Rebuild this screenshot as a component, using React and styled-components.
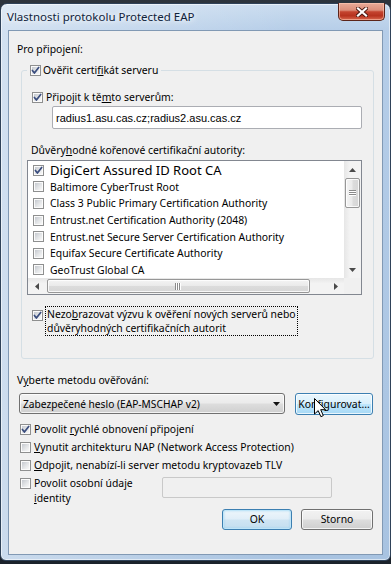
import React from "react";
import styled, { createGlobalStyle, css } from "styled-components";

const UI = `"Noto Sans", "Open Sans", "Liberation Sans", sans-serif`;

const GlobalStyle = createGlobalStyle`
  *, *::before, *::after { box-sizing: border-box; }
  html, body { margin: 0; padding: 0; }
  body {
    width: 391px; height: 564px; overflow: hidden;
    background: #1f2731;
    font-family: ${UI};
    font-size: 10.4px;
    color: #000;
  }
`;

const Screen = styled.div`
  width: 391px;
  height: 564px;
  padding-top: 3px;
  background: linear-gradient(180deg, #2d343d 0, #1b222b 100%);
`;

const Window = styled.div`
  height: 558px;
  display: flex;
  flex-direction: column;
  border: 1px solid #2f4259;
  border-radius: 7px 7px 6px 6px;
  background:
    linear-gradient(90deg, rgba(255,255,255,.40) 0%, rgba(255,255,255,.18) 40%, rgba(255,255,255,0) 75%),
    linear-gradient(180deg, #cadcef 0%, #b5cde8 28px, #a8c3e1 100%);
  box-shadow: inset 0 0 0 1px rgba(255,255,255,.55);
`;

const TitleBar = styled.div`
  height: 26px;
  flex: none;
  display: flex;
  align-items: flex-start;
  justify-content: space-between;
  padding: 0 5px 0 6px;
`;

const Title = styled.div`
  margin-top: 5px;
  font-size: 11.5px;
  line-height: 15px;
  color: #10233b;
  white-space: nowrap;
  text-shadow: 0 0 5px #fff, 0 0 9px rgba(255,255,255,.9);
`;

const CloseButton = styled.div`
  margin-top: -1px;
  width: 47px;
  height: 18px;
  border: 1px solid #5b2419;
  border-top: none;
  border-radius: 0 0 5px 5px;
  background: linear-gradient(180deg, #e9ab99 0%, #dc8e7a 42%, #c4442f 52%, #b6321e 75%, #d9684f 100%);
  box-shadow: inset 0 0 0 1px rgba(255,205,185,.55);
  display: flex;
  align-items: center;
  justify-content: center;
`;

const Client = styled.div`
  flex: 1;
  margin: 0 7px 5px;
  border: 1px solid #8199b4;
  background: #f0f0f0;
  display: flex;
  flex-direction: column;
  align-items: flex-start;
  padding: 10px 8px 0;
`;

const Text = styled.div`
  line-height: 16px;
  white-space: nowrap;
  margin: ${(p) => p.$m || "0"};
`;

const Acc = styled.span`
  text-decoration: underline;
  text-underline-offset: 1px;
`;

const Group = styled.fieldset`
  align-self: stretch;
  margin: 5px 0 0 4px;
  padding: 0 11px 22px 5px;
  border: 1px solid #d5dfe5;
  border-radius: 3px;
  min-inline-size: 0;
`;

const Legend = styled.legend`
  padding: 0 3px;
  height: 16px;
  display: flex;
  align-items: center;
  gap: 2px;
  line-height: 16px;
  white-space: nowrap;
`;

const GroupBody = styled.div`
  display: flex;
  flex-direction: column;
  align-items: flex-start;
`;

const CheckRow = styled.label`
  display: flex;
  align-items: center;
  gap: ${(p) => p.$gap || 3}px;
  height: 16px;
  line-height: 16px;
  white-space: nowrap;
  margin: ${(p) => p.$m || "0"};
`;

const ServerInput = styled.div`
  align-self: stretch;
  margin: 1px 0 0 25px;
  height: 23px;
  border: 1px solid #abadb3;
  border-radius: 2px;
  background: #fff;
  display: flex;
  align-items: center;
  padding-left: 3px;
  font-family: "Liberation Sans", Arial, sans-serif;
  font-size: 11px;
`;

const ListBox = styled.div`
  align-self: stretch;
  margin-top: 2px;
  height: 135px;
  border: 1px solid #828790;
  background: #fff;
  display: grid;
  grid-template-columns: 1fr 17px;
  grid-template-rows: 1fr 16px;
`;

const ListRows = styled.div`
  overflow: hidden;
  display: flex;
  flex-direction: column;
  padding-top: 1px;
`;

const ListRow = styled.div`
  flex: none;
  height: 16.6px;
  display: flex;
  align-items: center;
  gap: 6px;
  padding-left: 5px;
  white-space: nowrap;
  font-size: ${(p) => (p.$big ? "13px" : "10.4px")};
`;

const VScroll = styled.div`
  display: flex;
  flex-direction: column;
  background: linear-gradient(90deg, #e6e6e6 0%, #f3f3f3 35%, #f3f3f3 100%);
`;

const HScroll = styled.div`
  display: flex;
  align-items: stretch;
  background: linear-gradient(180deg, #e6e6e6 0%, #f3f3f3 35%, #f3f3f3 100%);
`;

const Corner = styled.div`
  background: #f0f0f0;
`;

const ArrowBtn = styled.div`
  flex: none;
  width: 17px;
  height: 17px;
  display: flex;
  align-items: center;
  justify-content: center;
  ${(p) => p.$h && css`height: 16px;`}
`;

const VThumb = styled.div`
  flex: none;
  height: 30px;
  margin: 0 1px;
  border: 1px solid #979797;
  border-radius: 2px;
  background: linear-gradient(90deg, #f4f4f4 0%, #eaeaea 48%, #dcdcdc 52%, #d6d6d6 100%);
  box-shadow: inset 0 0 0 1px rgba(255,255,255,.8);
  display: flex;
  align-items: center;
  justify-content: center;
`;

const HThumb = styled.div`
  flex: none;
  width: 263px;
  margin: 1px 0 1px 2px;
  border: 1px solid #979797;
  border-radius: 2px;
  background: linear-gradient(180deg, #f4f4f4 0%, #eaeaea 48%, #dcdcdc 52%, #d6d6d6 100%);
  box-shadow: inset 0 0 0 1px rgba(255,255,255,.8);
  display: flex;
  align-items: center;
  justify-content: center;
`;

const Track = styled.div`
  flex: 1;
`;

const FocusText = styled.span`
  border: 1px dotted #000;
  padding: 0 1px;
  line-height: 14.2px;
  white-space: nowrap;
`;

const FocusRow = styled.label`
  display: flex;
  align-items: flex-start;
  gap: 2px;
  margin: 11px 0 0 5px;
  & > svg { margin-top: 4px; }
`;

const MethodRow = styled.div`
  display: flex;
  align-items: flex-start;
  margin: 5px 0 0 2px;
`;

const buttonBase = css`
  border: 1px solid #707070;
  border-radius: 3px;
  background: linear-gradient(180deg, #f2f2f2 0%, #ebebeb 48%, #dddddd 52%, #cfcfcf 100%);
  box-shadow: inset 0 0 0 1px rgba(255,255,255,.75);
  font-family: ${UI};
  font-size: 10.4px;
  color: #000;
`;

const Combo = styled.div`
  ${buttonBase};
  width: 266px;
  height: 21px;
  display: flex;
  align-items: center;
  justify-content: space-between;
  padding: 0 4px 0 3px;
  white-space: nowrap;
  font-size: 10.2px;
`;

const Button = styled.div`
  ${buttonBase};
  position: relative;
  flex: none;
  width: ${(p) => p.$w}px;
  height: ${(p) => p.$h || 21}px;
  margin-left: ${(p) => p.$ml || 0}px;
  display: flex;
  align-items: center;
  justify-content: center;
  white-space: nowrap;
  ${(p) =>
    p.$hover &&
    css`
      border-color: #3c7fb1;
      background: linear-gradient(180deg, #eaf6fd 0%, #d9f0fc 48%, #bee6fd 52%, #a7d9f5 100%);
    `}
  ${(p) =>
    p.$default &&
    css`
      border-color: #3c7fb1;
      background: linear-gradient(180deg, #eef6fb 0%, #e0eef8 48%, #cfe5f3 52%, #c3def0 100%);
      box-shadow: inset 0 0 0 1px #bfe5f8, inset 0 0 2px 1px rgba(120,200,240,.6);
    `}
`;

const Cursor = styled.svg`
  position: absolute;
  left: 18px;
  top: 4px;
`;

const Options = styled.div`
  display: flex;
  flex-direction: column;
  gap: 2px;
  margin: 6px 0 0 3px;
`;

const IdentityRow = styled.div`
  display: flex;
  align-items: flex-start;
  margin: 3px 0 0 3px;
  & > svg { margin-top: 2px; }
`;

const IdentityLabel = styled.span`
  width: 124px;
  margin-left: 3px;
  line-height: 14.2px;
`;

const DisabledInput = styled.div`
  width: 170px;
  height: 21px;
  margin: 1px 0 0 4px;
  border: 1px solid #c9c9c9;
  border-radius: 2px;
  background: #f0f0f0;
`;

const Buttons = styled.div`
  align-self: stretch;
  display: flex;
  justify-content: flex-end;
  gap: 9px;
  margin: 4px 1px 0 0;
`;

function Check({ checked }) {
  return (
    <svg width="11" height="11" viewBox="0 0 11 11" style={{ flex: "none" }}>
      <defs>
        <linearGradient id="cbInner" x1="0" y1="0" x2="1" y2="1">
          <stop offset="0" stopColor="#c5c9cf" />
          <stop offset="0.55" stopColor="#e4e6e8" />
          <stop offset="1" stopColor="#f8f8f8" />
        </linearGradient>
      </defs>
      <rect x="0.5" y="0.5" width="10" height="10" fill="#fbfbfb" stroke="#8e8f8f" />
      <rect x="2" y="2" width="7" height="7" fill="url(#cbInner)" />
      {checked && (
        <path d="M2.4 5.4 L4.4 8 L8.7 2.4" fill="none" stroke="#3a4d7e" strokeWidth="1.7" strokeLinecap="round" strokeLinejoin="round" />
      )}
    </svg>
  );
}

function Tri({ dir, color = "#4a4a4a" }) {
  const paths = {
    up: "M0 4 L3.5 0 L7 4 Z",
    down: "M0 0 L7 0 L3.5 4 Z",
    left: "M4 0 L4 7 L0 3.5 Z",
    right: "M0 0 L0 7 L4 3.5 Z",
  };
  const vert = dir === "up" || dir === "down";
  return (
    <svg width={vert ? 7 : 4} height={vert ? 4 : 7} viewBox={vert ? "0 0 7 4" : "0 0 4 7"}>
      <path d={paths[dir]} fill={color} />
    </svg>
  );
}

function GripV() {
  return (
    <svg width="7" height="7" viewBox="0 0 7 7">
      {[1, 3, 5].map((y) => (
        <g key={y}>
          <rect x="0" y={y - 1} width="7" height="1" fill="#8a8a8a" />
          <rect x="0" y={y} width="7" height="1" fill="#fff" />
        </g>
      ))}
    </svg>
  );
}

function GripH() {
  return (
    <svg width="7" height="7" viewBox="0 0 7 7">
      {[1, 3, 5].map((x) => (
        <g key={x}>
          <rect x={x - 1} y="0" width="1" height="7" fill="#8a8a8a" />
          <rect x={x} y="0" width="1" height="7" fill="#fff" />
        </g>
      ))}
    </svg>
  );
}

const certs = [
  "Baltimore CyberTrust Root",
  "Class 3 Public Primary Certification Authority",
  "Entrust.net Certification Authority (2048)",
  "Entrust.net Secure Server Certification Authority",
  "Equifax Secure Certificate Authority",
  "GeoTrust Global CA",
];

export default function App() {
  return (
    <>
      <GlobalStyle />
      <Screen>
        <Window>
          <TitleBar>
            <Title>Vlastnosti protokolu Protected EAP</Title>
            <CloseButton>
              <svg width="12" height="10" viewBox="0 0 12 10">
                <path d="M2 1.5 L10 8.5 M10 1.5 L2 8.5" stroke="#4a1810" strokeWidth="4" strokeLinecap="square" />
                <path d="M2 1.5 L10 8.5 M10 1.5 L2 8.5" stroke="#ffffff" strokeWidth="2.2" strokeLinecap="square" />
              </svg>
            </CloseButton>
          </TitleBar>
          <Client>
            <Text>Pro připojení:</Text>
            <Group>
              <Legend>
                <Check checked />
                <span>
                  Ověřit certi<Acc>f</Acc>ikát serveru
                </span>
              </Legend>
              <GroupBody>
                <CheckRow $m="11px 0 0 5px">
                  <Check checked />
                  <span>
                    Připojit k tě<Acc>m</Acc>to serverům:
                  </span>
                </CheckRow>
                <ServerInput>radius1.asu.cas.cz;radius2.asu.cas.cz</ServerInput>
                <Text $m="13px 0 0 4px">
                  Důvěry<Acc>h</Acc>odné kořenové certifikační autority:
                </Text>
                <ListBox>
                  <ListRows>
                    <ListRow $big>
                      <Check checked />
                      <span>DigiCert Assured ID Root CA</span>
                    </ListRow>
                    {certs.map((c) => (
                      <ListRow key={c}>
                        <Check />
                        <span>{c}</span>
                      </ListRow>
                    ))}
                  </ListRows>
                  <VScroll>
                    <ArrowBtn>
                      <Tri dir="up" />
                    </ArrowBtn>
                    <VThumb>
                      <GripV />
                    </VThumb>
                    <Track />
                    <ArrowBtn>
                      <Tri dir="down" />
                    </ArrowBtn>
                  </VScroll>
                  <HScroll>
                    <ArrowBtn $h>
                      <Tri dir="left" />
                    </ArrowBtn>
                    <HThumb>
                      <GripH />
                    </HThumb>
                    <Track />
                    <ArrowBtn $h>
                      <Tri dir="right" />
                    </ArrowBtn>
                  </HScroll>
                  <Corner />
                </ListBox>
                <FocusRow>
                  <Check checked />
                  <FocusText>
                    Nezo<Acc>b</Acc>razovat výzvu k ověření nových serverů nebo
                    <br />
                    důvěryhodných certifikačních autorit
                  </FocusText>
                </FocusRow>
              </GroupBody>
            </Group>
            <Text $m="13px 0 0 0">
              V<Acc>y</Acc>berte metodu ověřování:
            </Text>
            <MethodRow>
              <Combo>
                <span>Zabezpečené heslo (EAP-MSCHAP v2)</span>
                <Tri dir="down" color="#111" />
              </Combo>
              <Button $w={78} $h={22} $ml={10} $hover>
                <span>
                  Kon<Acc>f</Acc>igurovat...
                </span>
                <Cursor width="13" height="20" viewBox="0 0 13 20">
                  <path d="M0.5 0.5 L0.5 16 L4.2 12.6 L6.9 18.7 L9.3 17.6 L6.7 11.7 L11.5 11.7 Z" fill="#fff" stroke="#000" strokeWidth="1" strokeLinejoin="miter" />
                </Cursor>
              </Button>
            </MethodRow>
            <Options>
              <CheckRow>
                <Check checked />
                <span>
                  Povolit <Acc>r</Acc>ychlé obnovení připojení
                </span>
              </CheckRow>
              <CheckRow>
                <Check />
                <span>
                  <Acc>V</Acc>ynutit architekturu NAP (Network Access Protection)
                </span>
              </CheckRow>
              <CheckRow>
                <Check />
                <span>
                  <Acc>O</Acc>dpojit, nenabízí-li server metodu kryptovazeb TLV
                </span>
              </CheckRow>
            </Options>
            <IdentityRow>
              <Check />
              <IdentityLabel>
                Povolit osobní údaje <Acc>i</Acc>dentity
              </IdentityLabel>
              <DisabledInput />
            </IdentityRow>
            <Buttons>
              <Button $w={70} $default>
                OK
              </Button>
              <Button $w={72}>Storno</Button>
            </Buttons>
          </Client>
        </Window>
      </Screen>
    </>
  );
}
